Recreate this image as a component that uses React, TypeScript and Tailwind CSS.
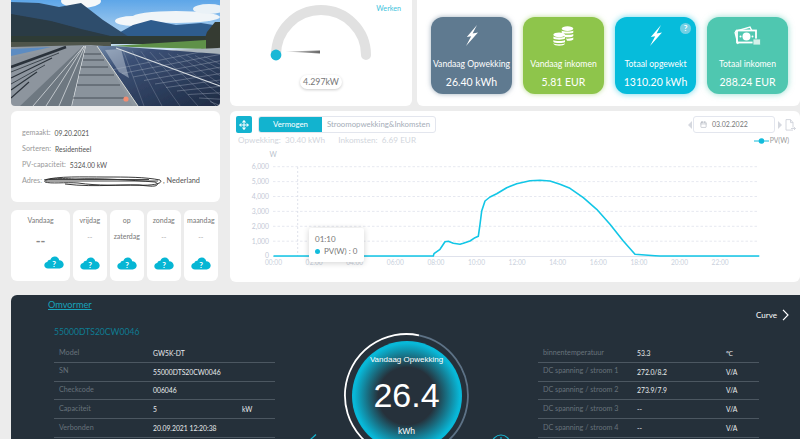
import { Move, Calendar } from "lucide-react";

const CURVE =
  "273.5,255 433.3,255 434,252.7 440,248.3 445,240.7 448.3,240.3 453.3,242.3 460,243.3 463.3,242.3 470,240 475,236.7 478.3,235.3 480,223.3 481.7,210 485,200 490,196 496.7,192.7 506.7,186.7 516.7,182.7 530,179.7 540,179.3 550,180 560,183.3 570,187.3 583.3,196.7 596.7,208.3 610,223.3 623.3,240 635,253.3 655,254.7 660,255 759.3,255";

const leftRows = [
  ["Model", "GW5K-DT", ""],
  ["SN", "55000DTS20CW0046", ""],
  ["Checkcode", "006046", ""],
  ["Capaciteit", "5", "kW"],
  ["Verbonden", "20.09.2021 12:20:38", ""],
];

const rightRows = [
  ["binnentemperatuur", "53.3", "℃"],
  ["DC spanning / stroom 1", "272.0/8.2", "V/A"],
  ["DC spanning / stroom 2", "273.9/7.9", "V/A"],
  ["DC spanning / stroom 3", "--", "V/A"],
  ["DC spanning / stroom 4", "--", "V/A"],
];

function Photo() {
  const panelRuns = [0, 1, 2, 3, 4, 5, 6, 7, 8, 9];
  return (
    <svg viewBox="0 0 209 106" className="block w-[209px] h-[106px]" preserveAspectRatio="none">
      <defs>
        <linearGradient id="sky" x1="0" y1="0" x2="0" y2="1">
          <stop offset="0" stopColor="#5ea6e8" />
          <stop offset="1" stopColor="#cfe3f2" />
        </linearGradient>
        <linearGradient id="solar" x1="0" y1="0" x2="1" y2="1">
          <stop offset="0" stopColor="#7189a8" />
          <stop offset="0.25" stopColor="#3b5075" />
          <stop offset="1" stopColor="#1e2b44" />
        </linearGradient>
        <filter id="soft">
          <feGaussianBlur stdDeviation="0.35" />
        </filter>
      </defs>
      <g filter="url(#soft)">
        <rect width="209" height="50" fill="url(#sky)" />
        <ellipse cx="70" cy="1" rx="20" ry="7" fill="#f6f8f9" />
        <ellipse cx="122" cy="21" rx="18" ry="5" fill="#f4f7f9" />
        <ellipse cx="165" cy="17" rx="44" ry="6" fill="#f0f5f8" />
        <ellipse cx="198" cy="9" rx="16" ry="5" fill="#eaf2f7" />
        <polygon points="104,35 122,25 140,20 165,25 190,23 209,26 209,43 104,43" fill="#2f5b8d" />
        <polygon points="0,2 28,3 48,7 70,3 92,20 118,37 118,44 0,44" fill="#2f4d6c" />
        <polygon points="0,14 40,21 70,29 108,38 108,44 0,44" fill="#2a3a44" />
        <rect x="0" y="36" width="209" height="8" fill="#2f3a36" />
        <polygon points="196,32 204,22 209,22 209,50 190,50" fill="#353b33" />
        <polygon points="100,46 195,40 195,49 122,47" fill="#5f9148" />
        <polygon points="160,50 209,48 209,60 175,53" fill="#aab4bb" />
        <rect x="0" y="42" width="100" height="5" fill="#4f544c" />
        <polygon points="0,47 80,45 209,55 209,106 0,106" fill="#8f98a1" />
        <polygon points="0,49 40,47 0,56" fill="#5c8cc2" />
        <polygon points="0,58 60,47 72,46 9,106 0,106" fill="#8d959e" />
        <g stroke="#2a323a">
          <line x1="0" y1="67" x2="55" y2="47" strokeWidth="2.4" />
          <line x1="0" y1="72" x2="48" y2="53" strokeWidth="0.8" />
          <line x1="0" y1="78" x2="41" y2="58" strokeWidth="1.1" />
          <line x1="0" y1="84" x2="34" y2="65" strokeWidth="0.8" />
          <line x1="0" y1="90" x2="26" y2="72" strokeWidth="1.1" />
          <line x1="0" y1="98" x2="18" y2="82" strokeWidth="1.1" />
        </g>
        <polygon points="72,46 75,46 61,106 9,106" fill="#6e7881" />
        <g stroke="#e3e7ea" strokeWidth="0.7">
          <line x1="73" y1="46" x2="22" y2="106" />
          <line x1="73" y1="46" x2="35" y2="106" />
          <line x1="74" y1="46" x2="48" y2="106" />
          <line x1="75" y1="46" x2="61" y2="106" strokeWidth="1.3" />
        </g>
        <polygon points="75,46 86,46 122,106 61,106" fill="#8a939c" />
        <g stroke="#3f4750" strokeWidth="0.9">
          <line x1="73" y1="54" x2="90" y2="54" />
          <line x1="72" y1="60" x2="93" y2="60" />
          <line x1="70" y1="67" x2="97" y2="67" />
          <line x1="68" y1="75" x2="103" y2="75" />
          <line x1="66" y1="85" x2="109" y2="85" />
          <line x1="62" y1="98" x2="117" y2="98" />
        </g>
        <polygon points="86,46 102,46 209,54 209,106 127,106" fill="url(#solar)" />
        <polygon points="94,50 110,49 118,78 108,72" fill="#c3ced9" opacity="0.5" />
        <g stroke="#aeb9c6" strokeWidth="0.5">
          {panelRuns.map((i) => (
            <line key={i} x1={100 + i * 11} y1={70 + i * 3.5} x2={209} y2={48 + i * 6.4} opacity="0.75" />
          ))}
          {panelRuns.map((i) => (
            <line key={i} x1={112 + i * 9} y1={50 + i * 0.7} x2={133 + i * 18} y2={106} opacity="0.55" />
          ))}
        </g>
        <line x1="105" y1="48" x2="209" y2="86" stroke="#d5dbe0" strokeWidth="1.3" />
        <line x1="86" y1="46" x2="127" y2="106" stroke="#d6d9d4" strokeWidth="1" />
      </g>
      <circle cx="115" cy="99" r="2.6" fill="#f28d72" />
    </svg>
  );
}

function Bolt() {
  return (
    <svg viewBox="0 0 12 21" className="w-[12px] h-[21px]">
      <polygon points="11,0 0.8,12 5.2,11.2 0,21 12,7.6 6.6,8.6" fill="#fff" />
    </svg>
  );
}

function Coins() {
  return (
    <svg viewBox="0 0 21 20" className="w-[21px] h-[20px]" fill="#fff">
      <ellipse cx="14.5" cy="2.6" rx="5.8" ry="2.4" />
      <path d="M8.7 4.4c1 1.3 10.6 1.3 11.6 0v2c-.8 1.4-10.8 1.4-11.6 0z" />
      <path d="M10 8.3c3 .8 7.5.8 10.3-.4v2.1c-1 1.4-6.3 1.5-8.5.9z" />
      <path d="M13 12.6c3 .2 6-.2 7.3-1v2c-.8 1-4 1.4-6.3 1.2z" />
      <ellipse cx="6.2" cy="8.8" rx="5.8" ry="2.4" />
      <path d="M.4 10.6c1 1.3 10.6 1.3 11.6 0v2c-.8 1.4-10.8 1.4-11.6 0z" />
      <path d="M.4 14c1 1.3 10.6 1.3 11.6 0v2c-.8 1.4-10.8 1.4-11.6 0z" />
      <path d="M.4 17.2c1 1.3 10.6 1.3 11.6 0v.6c-.8 2.6-10.8 2.6-11.6 0z" />
    </svg>
  );
}

function Money() {
  return (
    <svg viewBox="0 0 27 20" className="w-[27px] h-[20px]">
      <path d="M1 5.5 16 1l2 4" fill="none" stroke="#fff" strokeWidth="1.4" />
      <rect x="3" y="4.5" width="19" height="12" fill="#4fc7b0" stroke="#fff" strokeWidth="1.8" />
      <path d="M1 6l3 12" stroke="#fff" strokeWidth="1.4" />
      <circle cx="12.5" cy="10.5" r="4" fill="#fff" />
      <circle cx="6.5" cy="10.5" r="1" fill="#fff" />
      <circle cx="18.5" cy="10.5" r="1" fill="#fff" />
      <rect x="19" y="13" width="7.5" height="6" fill="#d5f1ea" stroke="#4fc7b0" strokeWidth="0.8" />
    </svg>
  );
}

function StatCard({ bg, icon, label, value, help }: { bg: string; icon: React.ReactNode; label: string; value: string; help?: boolean }) {
  return (
    <div className={`relative w-[81px] h-[77px] rounded-xl flex flex-col items-center text-white ${bg}`}>
      <div className="h-[24px] mt-[7px] flex items-center justify-center">{icon}</div>
      <div className="mt-[10px] text-[8.6px] leading-[12px] whitespace-nowrap">{label}</div>
      <div className="mt-[6px] text-[10.5px] leading-[12px] whitespace-nowrap">{value}</div>
      {help && (
        <div className="absolute top-[6px] right-[5px] w-[11px] h-[11px] rounded-full bg-[#72d0e4] flex items-center justify-center text-[8px] font-bold leading-none">
          ?
        </div>
      )}
    </div>
  );
}

function Cloud() {
  return (
    <svg viewBox="0 0 20 13" className="w-[20px] h-[13px] block">
      <path
        d="M4 12.5C1.8 12.5.3 11 .3 9.3c0-1.8 1.3-3 3-3.2C3.7 4.4 5 3.6 6.4 3.8 7.3 1.7 9 .5 11 .6c2.3.1 3.9 1.8 4.2 3.7 2.5 0 4.5 2 4.5 4.3 0 2.3-1.8 3.9-4 3.9z"
        fill="#06b6d4"
      />
      <text x="10" y="10.5" textAnchor="middle" fontSize="8" fontWeight="700" fill="#fff">?</text>
    </svg>
  );
}

function Weather({ title, second }: { title: string; second?: boolean }) {
  return (
    <div className="w-[34.5px] h-[71px] rounded-md bg-white flex flex-col items-center pt-[5px] text-[7px] leading-[11px] text-[#777]">
      <div>{title}</div>
      {second ? (
        <div className="mt-[5px] h-[16px]">zaterdag</div>
      ) : (
        <div className="mt-[6px] h-[15px] text-[#aaa]">--</div>
      )}
      <div className="mt-[10px]">
        <Cloud />
      </div>
    </div>
  );
}

function InfoLine({ label, value }: { label: string; value: string }) {
  return (
    <div className="h-[16px] flex items-center whitespace-nowrap">
      <span className="text-[#999] text-[7.2px]">{label}:</span>
      <span className="text-[#555] text-[6.8px] ml-[4px]">{value}</span>
    </div>
  );
}

function Chart() {
  const ys = [165.7, 180.6, 195.5, 210.4, 225.3, 240.2];
  const yLabels = ["6,000", "5,000", "4,000", "3,000", "2,000", "1,000"];
  const hours = ["00:00", "02:00", "04:00", "06:00", "08:00", "10:00", "12:00", "14:00", "16:00", "18:00", "20:00", "22:00"];
  return (
    <div className="relative h-[136px]">
      <svg viewBox="230 146 570 136" className="block w-[570px] h-[136px]">
        <text x="273" y="155.5" textAnchor="middle" fontSize="7" fill="#b8bfcc">W</text>
        {ys.map((y, i) => (
          <g key={y}>
            <line x1="273" x2="759" y1={y} y2={y} stroke="#dfe2ec" strokeWidth="0.8" strokeDasharray="2.5 2" />
            <text x="269" y={y + 2.5} textAnchor="end" fontSize="6.8" fill="#c3c9d6">{yLabels[i]}</text>
          </g>
        ))}
        <text x="269" y="256.5" textAnchor="end" fontSize="6.8" fill="#c3c9d6">0</text>
        <line x1="297.7" x2="297.7" y1="166" y2="255" stroke="#dcdfe9" strokeWidth="0.9" strokeDasharray="2 2" />
        <line x1="273" x2="759" y1="255.5" y2="255.5" stroke="#dfe2ec" />
        {hours.map((h, i) => (
          <text key={h} x={273.5 + i * 40.6} y="264" textAnchor="middle" fontSize="6.6" fill="#c9d0dc">{h}</text>
        ))}
        <polyline points={CURVE} fill="none" stroke="#12c6e6" strokeWidth="1.6" strokeLinejoin="round" />
      </svg>
      <div className="absolute left-[79px] top-[81px] w-[55px] h-[34px] bg-white rounded-[2px] shadow-[0_1px_6px_rgba(0,0,0,0.18)] px-[6px] pt-[5px] text-[8px] leading-[12px] text-[#777]">
        <div>01:10</div>
        <div className="flex items-center gap-[4px] whitespace-nowrap">
          <span className="shrink-0 w-[5px] h-[5px] rounded-full bg-[#12bcdc]" />
          PV(W) : 0
        </div>
      </div>
    </div>
  );
}

function DataTable({ rows }: { rows: string[][] }) {
  return (
    <div className="w-[221px]">
      {rows.map((r) => (
        <div key={r[0]} className="flex items-center h-[18.8px] border-b border-[#4c5761] pl-[5px]">
          <div className="w-[94px] shrink-0 text-[7.2px] text-[#67727b] whitespace-nowrap">{r[0]}</div>
          <div className="w-[89px] shrink-0 text-[6.8px] text-[#e8ebed] whitespace-nowrap">{r[1]}</div>
          <div className="text-[6.8px] text-[#e8ebed]">{r[2]}</div>
        </div>
      ))}
    </div>
  );
}

export default function App() {
  return (
    <div className="relative w-[800px] h-[439px] overflow-hidden bg-[#ececec] font-['Lato',sans-serif]">
      <div className="flex h-[295px] pl-[11px]">
        {/* left column */}
        <div className="w-[209px] flex flex-col">
          <div className="h-[106px] overflow-hidden rounded-b-sm">
            <Photo />
          </div>
          <div className="mt-[5px] h-[91px] rounded-md bg-white pl-[11px] pt-[14px]">
            <InfoLine label="gemaakt" value="09.20.2021" />
            <InfoLine label="Sorteren" value="Residentieel" />
            <InfoLine label="PV-capaciteit" value="5324.00 kW" />
            <div className="h-[16px] whitespace-nowrap flex items-center">
              <span className="text-[#999] text-[7.2px]">Adres:</span>
              <svg viewBox="0 0 120 13" className="w-[120px] h-[13px] ml-[1px]">
                <path
                  d="M1 5C15 1 40 2 62 2s40 0 55 3c4 3-6 6-22 5-20 0-40 1-60-2C22 7 8 9 2 7c-2-3 10-4 30-3 26-1 54 1 80 3 5 2 2 5-6 4-24-3-52 2-84-2"
                  fill="none"
                  stroke="#222"
                  strokeWidth="0.9"
                />
                <path d="M3 6h112M6 4.5h100" stroke="#333" strokeWidth="0.9" fill="none" />
              </svg>
              <span className="text-[#555] text-[7.3px]">, Nederland</span>
            </div>
          </div>
          <div className="mt-[8px] flex gap-[2.5px]">
            <div className="w-[59px] h-[71px] rounded-md bg-white flex flex-col items-center pt-[5px] text-[7px] leading-[11px] text-[#777]">
              <div>Vandaag</div>
              <div className="mt-[8px] h-[14px] text-[13px] leading-[14px] font-bold text-[#888]">--</div>
              <div className="mt-[8px] self-end pr-[6px]">
                <Cloud />
              </div>
            </div>
            <Weather title="vrijdag" />
            <Weather title="op" second />
            <Weather title="zondag" />
            <Weather title="maandag" />
          </div>
        </div>

        {/* right column */}
        <div className="ml-[10px] w-[570px] flex flex-col">
          <div className="flex h-[106px] gap-[5px]">
            <div className="relative w-[182px] rounded-b-md bg-white flex flex-col items-center pt-[4px]">
              <svg viewBox="0 0 110 60" className="w-[110px] h-[60px] block">
                <defs>
                  <linearGradient id="needle" x1="0" y1="0" x2="1" y2="0">
                    <stop offset="0" stopColor="#e5e5e5" />
                    <stop offset="1" stopColor="#666" />
                  </linearGradient>
                </defs>
                <path d="M10 51A45 45 0 0 1 100 51" fill="none" stroke="#e1e1e1" strokeWidth="10" strokeLinecap="round" />
                <polygon points="19,47.5 54,46.5 54,49.5" fill="url(#needle)" />
                <circle cx="10" cy="51" r="5.4" fill="#1bb8d6" />
              </svg>
              <div className="mt-[11px] h-[14px] px-[3px] rounded-full bg-white shadow-[0_1px_3px_rgba(0,0,0,0.2)] text-[8.8px] leading-[14px] text-[#777]">
                4.297kW
              </div>
              <div className="absolute top-[3px] right-[11px] text-[7.2px] leading-[12px] text-[#3fc3dc]">Werken</div>
            </div>
            <div className="flex-1 rounded-b-md bg-white flex gap-[11px] pl-[14px] pt-[16.5px]">
              <StatCard bg="bg-[#5f7a90] shadow-[0_0_5px_rgba(95,122,144,0.6)]" icon={<Bolt />} label="Vandaag Opwekking" value="26.40 kWh" />
              <StatCard bg="bg-[#8ec54b] shadow-[0_0_5px_rgba(142,197,75,0.6)]" icon={<Coins />} label="Vandaag inkomen" value="5.81 EUR" />
              <StatCard bg="bg-[#06bcdb] shadow-[0_0_6px_rgba(6,188,219,0.6)]" icon={<Bolt />} label="Totaal opgewekt" value="1310.20 kWh" help />
              <StatCard bg="bg-[#4fc7b0] shadow-[0_0_6px_rgba(79,199,176,0.6)]" icon={<Money />} label="Totaal inkomen" value="288.24 EUR" />
            </div>
          </div>

          <div className="mt-[5px] h-[171px] rounded-md bg-white">
            <div className="flex items-center h-[17px] mt-[5px] pl-[6px]">
              <div className="w-[16px] h-[17px] rounded-[2px] bg-[#14b3d0] flex items-center justify-center text-white">
                <Move size={10} strokeWidth={2.5} />
              </div>
              <div className="ml-[6px] w-[178px] h-[17px] flex border border-[#e3e6ee] rounded-[3px] text-[7.8px] leading-[15px]">
                <div className="w-[63px] shrink-0 bg-[#12b3cf] text-white text-center rounded-l-[2px]">Vermogen</div>
                <div className="flex-1 text-center text-[#a5adb8] whitespace-nowrap">Stroomopwekking&amp;Inkomsten</div>
              </div>
              <div className="ml-auto flex items-center pr-[4px]">
                <svg viewBox="0 0 4 8" className="w-[4px] h-[8px] text-[#d5d8df]">
                  <polygon points="4,0 0,4 4,8" fill="currentColor" />
                </svg>
                <div className="ml-[1px] w-[82px] h-[17px] border border-[#e3e6ee] rounded-[3px] flex items-center pl-[6px] gap-[5px] text-[7px] text-[#777]">
                  <Calendar size={7} className="text-[#aab0ba]" />
                  03.02.2022
                </div>
                <svg viewBox="0 0 4 8" className="ml-[3px] w-[4px] h-[8px] text-[#d5d8df]">
                  <polygon points="0,0 4,4 0,8" fill="currentColor" />
                </svg>
                <svg viewBox="0 0 11 12" className="ml-[3px] w-[11px] h-[12px]" fill="none" stroke="#cfd3da" strokeWidth="0.9">
                  <path d="M8 8.5V3.5L5.5.6H1v10.5h7" />
                  <path d="M5.5.6v3H8M6 9.5h4.5M9 8l1.5 1.5L9 11" />
                </svg>
              </div>
            </div>
            <div className="flex items-center justify-between h-[13px] mt-[1px] pl-[8px] pr-[11px] text-[8.2px] text-[#d2d6dd]">
              <div className="whitespace-nowrap">
                Opwekking:&nbsp; 30.40 kWh <span className="ml-[11px]">Inkomsten:&nbsp; 6.69 EUR</span>
              </div>
              <div className="flex items-center gap-[1px] text-[6.8px] text-[#999]">
                <svg viewBox="0 0 15 6" className="w-[15px] h-[6px]">
                  <line x1="0" x2="15" y1="3" y2="3" stroke="#12bcdc" strokeWidth="1" />
                  <circle cx="7.5" cy="3" r="2.8" fill="#12bcdc" />
                </svg>
                PV(W)
              </div>
            </div>
            <Chart />
          </div>
        </div>
      </div>

      {/* inverter panel */}
      <div className="relative ml-[11px] h-[144px] rounded-tl-md bg-[#25303a] flex overflow-hidden">
        <div className="w-[333px] shrink-0 pl-[37px]">
          <div className="mt-[3px] text-[9.2px] leading-[13px] text-[#17a2bb] underline">Omvormer</div>
          <div className="mt-[15px] ml-[6px] text-[8.6px] leading-[13px] text-[#0e7c92]">55000DTS20CW0046</div>
          <div className="mt-[5px] ml-[6px]">
            <DataTable rows={leftRows} />
          </div>
        </div>

        <div className="relative w-[125px] h-[125px] shrink-0 mt-[38px] p-[7.5px]">
          <svg viewBox="0 0 125 125" className="absolute inset-0 w-[125px] h-[125px]" fill="none" strokeWidth="1.8">
            <path d="M75 2.3A61.5 61.5 0 1 0 62.5 124" stroke="#fff" />
            <path d="M75 2.3A61.5 61.5 0 0 1 62.5 124" stroke="#5d7286" />
          </svg>
          <div className="w-[110px] h-[110px] rounded-full bg-[radial-gradient(circle_closest-side,#26313b_52%,#08b8d8_96%)] flex flex-col items-center text-white font-['Liberation_Sans',sans-serif]">
            <div className="mt-[13px] text-[8px] leading-[12px] whitespace-nowrap">Vandaag Opwekking</div>
            <div className="mt-[9px] text-[34px] leading-[40px]">26.4</div>
            <div className="mt-[10px] text-[8.5px] leading-[12px]">kWh</div>
          </div>
        </div>

        <div className="flex-1 pl-[69px]">
          <div className="mt-[14px] pr-[11px] flex justify-end items-center gap-[5px] text-[8px] leading-[12px] text-white">
            Curve
            <svg viewBox="0 0 7 12" className="w-[7px] h-[12px]" fill="none" stroke="#fff" strokeWidth="1.2">
              <path d="M1 .8 6 6l-5 5.2" />
            </svg>
          </div>
          <div className="mt-[23px]">
            <DataTable rows={rightRows} />
          </div>
        </div>

        <svg viewBox="0 0 10 8" className="absolute left-[298px] top-[139px] w-[10px] h-[8px]" fill="none" stroke="#17b5d1" strokeWidth="1.2">
          <path d="M7 .5 1 6" />
        </svg>
        <svg viewBox="0 0 20 20" className="absolute left-[480px] top-[139px] w-[20px] h-[20px]" fill="none" stroke="#17b5d1" strokeWidth="1.2">
          <circle cx="10" cy="10" r="9" />
          <path d="M10 3v8" />
        </svg>
      </div>
    </div>
  );
}
